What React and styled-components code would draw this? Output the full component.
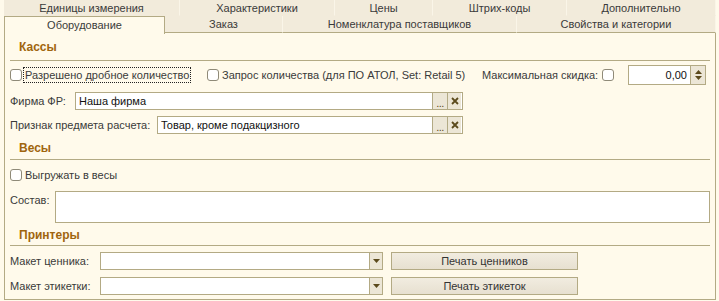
import React from "react";
import styled, { createGlobalStyle } from "styled-components";

const C = {
  bg: "#fffaeb",
  tab: "#f2ebdb",
  border: "#b3aa84",
  text: "#3a3a3a",
  head: "#a0650e",
  btn: "#ece6d6",
  glyph: "#5b4a1c",
};

const Global = createGlobalStyle`
  html, body { margin: 0; padding: 0; background: ${C.bg}; }
  body {
    font-family: "Liberation Sans", Arial, sans-serif;
    font-size: 11px;
    color: ${C.text};
  }
  * { box-sizing: border-box; }
`;

const Root = styled.div`
  width: 719px;
  height: 301px;
  padding: 0 3px 0 4px;
  background: ${C.bg};
`;

const TabRow = styled.div`
  display: flex;
  height: ${(p) => p.$h}px;
  position: relative;
  z-index: ${(p) => (p.$front ? 2 : 1)};
`;

const Tab = styled.div`
  width: ${(p) => p.$w}px;
  display: flex;
  align-items: center;
  justify-content: center;
  white-space: nowrap;
  background: ${(p) => (p.$active ? C.bg : C.tab)};
  border-right: 1px solid #faf5e8;
  ${(p) =>
    p.$active
      ? `border: 1px solid ${C.border}; border-bottom: none; margin-bottom: -1px; padding-bottom: 1px;`
      : `border-bottom: 1px solid ${p.$bottom ? C.border : "transparent"};`}
`;

const Panel = styled.div`
  width: 712px;
  height: 267px;
  border: 1px solid ${C.border};
  border-top: none;
  background: ${C.bg};
  padding: 0 5px 0 5px;
  display: flex;
  flex-direction: column;
`;

const Heading = styled.div`
  height: ${(p) => p.$h}px;
  border-bottom: 1px solid ${C.border};
  padding-left: 9px;
  display: flex;
  align-items: center;
  font-weight: bold;
  font-size: 12px;
  color: ${C.head};
  flex-shrink: 0;
`;

const Row = styled.div`
  display: flex;
  align-items: ${(p) => p.$align || "center"};
  height: ${(p) => p.$h}px;
  flex-shrink: 0;
  white-space: nowrap;
`;

const Group = styled.div`
  display: flex;
  align-items: center;
  width: ${(p) => (p.$w ? `${p.$w}px` : "auto")};
  flex-shrink: 0;
`;

const Box = styled.span`
  width: 12px;
  height: 12px;
  border: 1px solid #8f8a78;
  border-radius: 3px;
  background: #fff;
  flex-shrink: 0;
  margin-right: ${(p) => p.$mr ?? 3}px;
  margin-left: ${(p) => p.$ml ?? 0}px;
`;

const CheckLabel = styled.span`
  padding: 1px 1px;
  border: 1px dotted ${(p) => (p.$focus ? "#222" : "transparent")};
  margin-left: -2px;
`;

const Label = styled.span`
  width: ${(p) => p.$w}px;
  flex-shrink: 0;
  padding-top: ${(p) => p.$pt || 0}px;
`;

const Field = styled.div`
  display: flex;
  height: ${(p) => p.$h || 18}px;
  width: ${(p) => (p.$w ? `${p.$w}px` : "auto")};
  flex: ${(p) => (p.$grow ? 1 : "none")};
  border: 1px solid ${C.border};
  background: #fff;
  margin-top: ${(p) => p.$mt || 0}px;
`;

const FieldText = styled.div`
  flex: 1;
  padding: 0 3px;
  display: flex;
  align-items: center;
  justify-content: ${(p) => (p.$right ? "flex-end" : "flex-start")};
  color: ${(p) => p.$color || "#111"};
  overflow: hidden;
`;

const SideBtn = styled.div`
  width: ${(p) => p.$w || 15}px;
  border-left: 1px solid ${C.border};
  background: ${C.btn};
  display: flex;
  align-items: center;
  justify-content: center;
  flex-shrink: 0;
  color: ${C.glyph};
`;

const Dots = styled.span`
  font-size: 11px;
  line-height: 1;
  margin-top: 5px;
  letter-spacing: -0.5px;
`;

const Spin = styled.div`
  width: 15px;
  border-left: 1px solid ${C.border};
  background: ${C.btn};
  display: flex;
  flex-direction: column;
  align-items: center;
  justify-content: space-around;
  padding: 3px 0;
`;

const PushButton = styled.div`
  width: 187px;
  height: 18px;
  margin-left: 8px;
  border: 1px solid ${C.border};
  background: linear-gradient(#f1ece0, #e7e0d0);
  display: flex;
  align-items: center;
  justify-content: center;
  color: #333;
`;

const Tri = ({ up }) => (
  <svg width="7" height="4" viewBox="0 0 7 4">
    <path d={up ? "M0 4 L3.5 0 L7 4 Z" : "M0 0 L7 0 L3.5 4 Z"} fill={C.glyph} />
  </svg>
);

const Cross = () => (
  <svg width="8" height="8" viewBox="0 0 8 8">
    <path d="M1 1 L7 7 M7 1 L1 7" stroke={C.glyph} strokeWidth="1.8" />
  </svg>
);

const topTabs = [
  ["Единицы измерения", 176],
  ["Характеристики", 155],
  ["Цены", 98],
  ["Штрих-коды", 134],
  ["Дополнительно", 149],
];
const bottomTabs = [
  ["Оборудование", 161, true],
  ["Заказ", 118],
  ["Номенклатура поставщиков", 234],
  ["Свойства и категории", 199],
];

const Choice = ({ w, label, value }) => (
  <Row $h={24}>
    <Label $w={w}>{label}</Label>
    <Field $w={423 - w}>
      <FieldText>{value}</FieldText>
    </Field>
    <Field $w={30} style={{ borderLeft: "none" }}>
      <SideBtn style={{ borderLeft: "none" }} $w={14}>
        <Dots>...</Dots>
      </SideBtn>
      <SideBtn $w={14}>
        <Cross />
      </SideBtn>
    </Field>
  </Row>
);

const Combo = ({ label, button, h }) => (
  <Row $h={h}>
    <Label $w={90}>{label}</Label>
    <Field $w={283}>
      <FieldText />
      <SideBtn $w={13}>
        <Tri />
      </SideBtn>
    </Field>
    <PushButton>{button}</PushButton>
  </Row>
);

export default function App() {
  return (
    <Root>
      <Global />
      <TabRow $h={16}>
        {topTabs.map(([t, w]) => (
          <Tab key={t} $w={w}>
            {t}
          </Tab>
        ))}
      </TabRow>
      <TabRow $h={17} $front>
        {bottomTabs.map(([t, w, a]) => (
          <Tab key={t} $w={w} $active={a} $bottom>
            {t}
          </Tab>
        ))}
      </TabRow>
      <Panel>
        <Heading $h={28}>Кассы</Heading>
        <Row $h={28}>
          <Group $w={197}>
            <Box />
            <CheckLabel $focus>Разрешено дробное количество</CheckLabel>
          </Group>
          <Group $w={275}>
            <Box />
            <span>Запрос количества (для ПО АТОЛ, Set: Retail 5)</span>
          </Group>
          <Group $w={146}>
            <span>Максимальная скидка:</span>
            <Box $ml={4} $mr={0} />
          </Group>
          <Field $w={78} $h={20}>
            <FieldText $right>0,00</FieldText>
            <Spin>
              <Tri up />
              <Tri />
            </Spin>
          </Field>
        </Row>
        <Choice w={65} label="Фирма ФР:" value="Наша фирма" />
        <Choice w={147} label="Признак предмета расчета:" value="Товар, кроме подакцизного" />
        <Heading $h={23}>Весы</Heading>
        <Row $h={30}>
          <Box />
          <span>Выгружать в весы</span>
        </Row>
        <Row $h={34} $align="flex-start">
          <Label $w={45} $pt={4}>Состав:</Label>
          <Field $grow $h={32} $mt={1} />
        </Row>
        <Heading $h={22}>Принтеры</Heading>
        <Combo label="Макет ценника:" button="Печать ценников" h={30} />
        <Combo label="Макет этикетки:" button="Печать этикеток" h={20} />
      </Panel>
    </Root>
  );
}
